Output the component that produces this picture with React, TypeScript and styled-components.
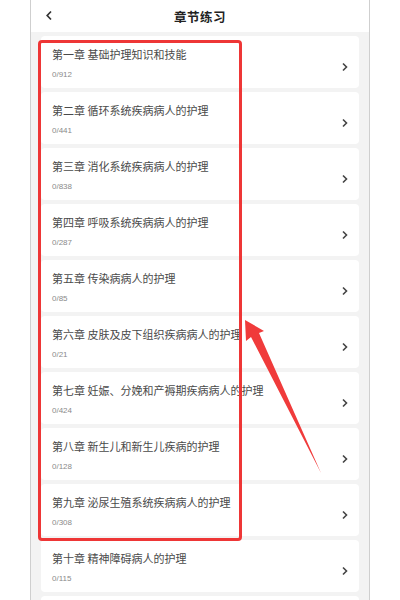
import React from "react"
import styled, { createGlobalStyle } from "styled-components"

const GlobalStyle = createGlobalStyle`
  body {
    margin: 0;
    background: #ffffff;
    font-family: "Noto Sans CJK SC", "Noto Sans", sans-serif;
  }
`

const Stage = styled.div`
  position: relative;
  width: 400px;
  height: 600px;
  overflow: hidden;
  background: #ffffff;
`

const Phone = styled.div`
  width: 338px;
  height: 600px;
  margin: 0 auto;
  border-left: 1px solid #cfcfcf;
  border-right: 1px solid #cfcfcf;
  background: #f3f3f3;
`

const Header = styled.header`
  height: 32px;
  display: flex;
  align-items: center;
  justify-content: center;
  position: relative;
  background: #ffffff;
`

const Back = styled.svg`
  position: absolute;
  left: 14px;
  top: 10px;
`

const Title = styled.h1`
  margin: 0;
  font-size: 12.5px;
  font-weight: 700;
  color: #222;
  letter-spacing: 0.5px;
`

const List = styled.div`
  display: flex;
  flex-direction: column;
  gap: 4px;
  padding: 4px 10px 0;
`

const Card = styled.div`
  height: 52px;
  flex-shrink: 0;
  background: #ffffff;
  border-radius: 4px;
  display: flex;
  align-items: center;
  justify-content: space-between;
  padding: 0 10px 0 11px;
`

const Info = styled.div`
  display: flex;
  flex-direction: column;
  gap: 9px;
  margin-top: 3px;
`

const Name = styled.div`
  font-size: 11px;
  line-height: 14px;
  color: #4a4a4a;
`

const Count = styled.div`
  font-size: 8px;
  line-height: 10px;
  color: #8a8a8a;
  font-family: "Liberation Sans", sans-serif;
`

const Arrow = styled.svg`
  margin-top: 10px;
`

const Mark = styled.div`
  position: absolute;
  left: 38px;
  top: 40px;
  width: 198px;
  height: 495px;
  border: 3px solid #ee3636;
  border-radius: 4px;
`

const Pointer = styled.svg`
  position: absolute;
  left: 0;
  top: 0;
`

const chapters = [
  ["第一章 基础护理知识和技能", "0/912"],
  ["第二章 循环系统疾病病人的护理", "0/441"],
  ["第三章 消化系统疾病病人的护理", "0/838"],
  ["第四章 呼吸系统疾病病人的护理", "0/287"],
  ["第五章 传染病病人的护理", "0/85"],
  ["第六章 皮肤及皮下组织疾病病人的护理", "0/21"],
  ["第七章 妊娠、分娩和产褥期疾病病人的护理", "0/424"],
  ["第八章 新生儿和新生儿疾病的护理", "0/128"],
  ["第九章 泌尿生殖系统疾病病人的护理", "0/308"],
  ["第十章 精神障碍病人的护理", "0/115"],
]

function Chevron() {
  return (
    <Arrow width="8" height="10" viewBox="0 0 8 10">
      <path d="M2 1.5 L5.5 5 L2 8.5" fill="none" stroke="#444" strokeWidth="1.6" />
    </Arrow>
  )
}

export default function App() {
  return (
    <Stage>
      <GlobalStyle />
      <Phone>
        <Header>
          <Back width="8" height="11" viewBox="0 0 8 11">
            <path d="M6 1.5 L2.2 5.5 L6 9.5" fill="none" stroke="#333" strokeWidth="1.7" />
          </Back>
          <Title>章节练习</Title>
        </Header>
        <List>
          {chapters.map(([name, count]) => (
            <Card key={name}>
              <Info>
                <Name>{name}</Name>
                <Count>{count}</Count>
              </Info>
              <Chevron />
            </Card>
          ))}
          <Card />
        </List>
      </Phone>
      <Mark />
      <Pointer width="400" height="600">
        <polygon
          points="245,320 264,331 259,333 321,473 251,337 246,341"
          fill="#f03b3b"
        />
      </Pointer>
    </Stage>
  )
}
